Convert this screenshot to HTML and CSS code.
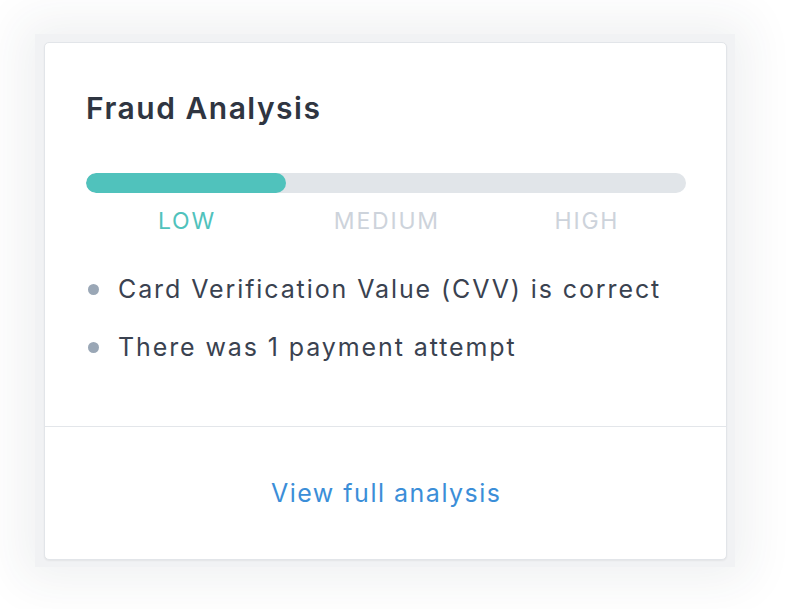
FILE: index.html
```html
<!DOCTYPE html>
<html>
<head>
<meta charset="utf-8">
<link rel="stylesheet" href="styles.css">
</head>
<body>
<div class="panel">
  <div class="card">
    <div class="card-body">
      <h2 class="title">Fraud Analysis</h2>
      <div class="meter">
        <div class="track"><div class="fill" style="width:33.4%"></div></div>
        <div class="labels">
          <span class="label active">LOW</span>
          <span class="label">MEDIUM</span>
          <span class="label">HIGH</span>
        </div>
      </div>
      <ul class="checks">
        <li>Card Verification Value (CVV) is correct</li>
        <li>There was 1 payment attempt</li>
      </ul>
    </div>
    <div class="card-footer">
      <a class="link" href="#">View full analysis</a>
    </div>
  </div>
</div>
</body>
</html>
```

FILE: styles.css
```css
* { box-sizing: border-box; }
html, body { margin: 0; background: #ffffff; }
body {
  font-family: Inter, "Noto Sans", sans-serif;
  padding: 34px 0 0 35px;
  width: 786px;
  height: 609px;
  overflow: hidden;
}
.panel {
  width: 700px;
  height: 533px;
  background: #f1f2f4;
  padding: 8px 8px 7px 9px;
  box-shadow: 0 0 45px 14px rgba(40, 50, 70, 0.07);
}
.card {
  width: 683px;
  height: 518px;
  background: #ffffff;
  border: 1px solid #e2e5e9;
  border-radius: 5px;
  box-shadow: 0 1px 2px rgba(0, 0, 0, 0.06);
  display: flex;
  flex-direction: column;
}
.card-body {
  height: 384px;
  padding: 48px 40px 0 41px;
  border-bottom: 1px solid #e3e6ea;
}
.title {
  margin: 0;
  font-size: 30px;
  line-height: 34px;
  font-weight: 600;
  color: #2f3541;
  letter-spacing: 1.5px;
}
.meter {
  margin-top: 48px;
  width: 600px;
}
.track {
  height: 20px;
  border-radius: 10px;
  background: #e1e5e9;
  overflow: hidden;
}
.fill {
  height: 100%;
  border-radius: 10px;
  background: #50c2bc;
}
.labels {
  display: grid;
  grid-template-columns: 1fr 1fr 1fr;
  margin-top: 12px;
}
.label {
  text-align: center;
  font-size: 23px;
  line-height: 32px;
  font-weight: 400;
  color: #cdd3db;
  letter-spacing: 1.8px;
  text-indent: 1.8px;
}
.label.active { color: #50c2bc; }
.checks {
  list-style: none;
  margin: 36px 0 0;
  padding: 0;
}
.checks li {
  display: flex;
  align-items: center;
  font-size: 25px;
  line-height: 32px;
  color: #3a4250;
  margin-bottom: 26px;
  letter-spacing: 1.9px;
}
.checks li::before {
  content: "";
  width: 11px;
  height: 11px;
  border-radius: 50%;
  background: #9aa7b6;
  margin: 0 19px 0 2px;
  flex: none;
}
.card-footer {
  flex: 1;
  display: flex;
  align-items: center;
  justify-content: center;
}
.link {
  font-size: 25px;
  color: #3b8ed8;
  text-decoration: none;
  letter-spacing: 1.5px;
  text-indent: 1.5px;
}
```
